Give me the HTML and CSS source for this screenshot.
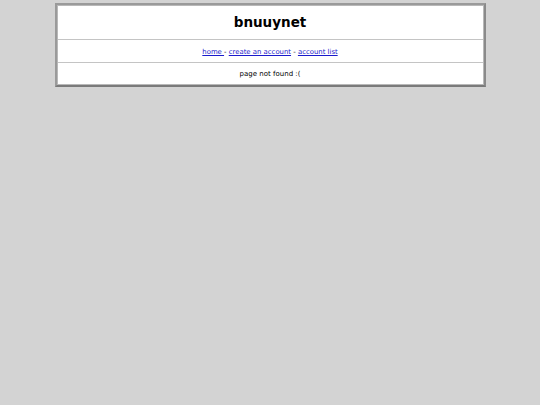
FILE: index.html
```html
<!DOCTYPE html>
<html>
<head>
<meta charset="utf-8">
<title>bnuuynet</title>
<link rel="stylesheet" href="styles.css">
</head>
<body>
<div class="box">
  <div class="row head"><h1 class="title">bnuuynet</h1></div>
  <div class="row nav"><a href="#">home </a> - <a href="#">create an account</a> - <a href="#">account list</a></div>
  <div class="row main">page not found :(</div>
</div>
</body>
</html>
```
FILE: styles.css
```css
html, body {
  margin: 0;
  padding: 0;
  background: #d3d3d3;
}
body {
  font-family: "DejaVu Sans", Verdana, sans-serif;
  color: #000;
  padding-top: 3px;
}
.box {
  width: 427px;
  margin: 0 auto;
  background: #fff;
  border-style: solid;
  border-width: 2px;
  border-color: #9a9a9a #8a8a8a #7a7a7a #9a9a9a;
  outline: 1px solid #b8b8b8;
  outline-offset: -3px;
}
.row {
  text-align: center;
  border-top: 1px solid #c4c4c4;
}
.row:first-child {
  border-top: none;
}
.head {
  height: 34px;
  display: flex;
  align-items: center;
  justify-content: center;
}
.title {
  margin: 0;
  font-size: 13.5px;
  font-weight: bold;
}
.nav, .main {
  font-size: 7px;
  height: 22px;
  line-height: 22px;
}
.nav {
  line-height: 24px;
  font-size: 6.9px;
}
.nav a {
  color: #1a1acc;
}
```
